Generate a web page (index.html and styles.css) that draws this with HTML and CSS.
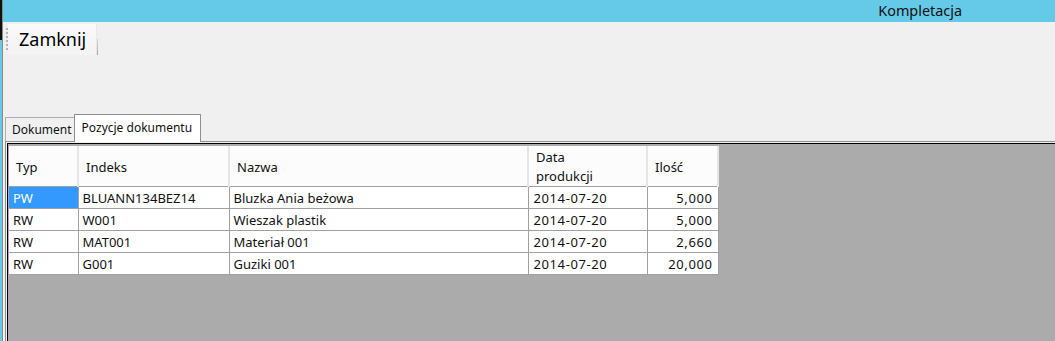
FILE: index.html
```html
<!DOCTYPE html>
<html lang="pl">
<head>
<meta charset="utf-8">
<link rel="stylesheet" href="styles.css">
</head>
<body>
<div class="app">
  <div class="edge"></div>
  <div class="main">
    <div class="titlebar"><span class="title">Kompletacja</span></div>
    <div class="toolbar">
      <div class="grip"></div>
      <div class="btn">Zamknij</div>
    </div>
    <div class="tabs">
      <div class="tab">Dokument</div>
      <div class="tab active">Pozycje dokumentu</div>
    </div>
    <div class="panel">
      <div class="grid">
        <table class="table">
          <colgroup>
            <col class="c1"><col class="c2"><col class="c3"><col class="c4"><col class="c5">
          </colgroup>
          <thead>
            <tr><th>Typ</th><th>Indeks</th><th>Nazwa</th><th>Data<br>produkcji</th><th>Ilość</th></tr>
          </thead>
          <tbody>
            <tr><td class="sel">PW</td><td>BLUANN134BEZ14</td><td>Bluzka Ania beżowa</td><td class="date">2014-07-20</td><td class="num">5,000</td></tr>
            <tr><td>RW</td><td>W001</td><td>Wieszak plastik</td><td class="date">2014-07-20</td><td class="num">5,000</td></tr>
            <tr><td>RW</td><td>MAT001</td><td>Materiał 001</td><td class="date">2014-07-20</td><td class="num">2,660</td></tr>
            <tr><td>RW</td><td>G001</td><td>Guziki 001</td><td class="date">2014-07-20</td><td class="num">20,000</td></tr>
          </tbody>
        </table>
      </div>
    </div>
  </div>
</div>
</body>
</html>
```
FILE: styles.css
```css
html, body {
  margin: 0;
  padding: 0;
}
body {
  width: 1055px;
  height: 341px;
  overflow: hidden;
  background: #f0f0f0;
  font-family: "Noto Sans", "Open Sans", sans-serif;
  color: #000;
}
.app {
  display: flex;
  height: 341px;
}
.edge {
  width: 2px;
  border-right: 1px solid #8a8a8a;
  background: linear-gradient(#111 0 40px, #65c9e8 40px);
  flex: none;
}
.main {
  flex: 1;
  display: flex;
  flex-direction: column;
  min-width: 0;
}
.titlebar {
  height: 22px;
  background: #65c9e8;
  display: flex;
  align-items: center;
  justify-content: flex-end;
  padding-right: 93px;
}
.title {
  font-size: 14.4px;
  color: #111;
  line-height: 22px;
}
.toolbar {
  height: 92px;
  display: flex;
  align-items: flex-start;
  padding-left: 3px;
  box-sizing: border-box;
}
.grip {
  width: 2px;
  height: 24px;
  margin-top: 6px;
  background: repeating-linear-gradient(#b4b4b4 0 2px, transparent 2px 4px);
}
.btn {
  margin-top: 2px;
  width: 89px;
  height: 31px;
  box-sizing: border-box;
  padding-left: 11px;
  font-size: 18px;
  line-height: 31px;
  background: linear-gradient(#fafafa, #f3f3f3);
  border-right: 1px solid #e8e8e8;
  color: #000;
  position: relative;
}
.btn::after {
  content: "";
  position: absolute;
  right: -2px;
  top: 15px;
  height: 16px;
  width: 1px;
  background: linear-gradient(#d8d8d8, #a8a8a8);
}
.tabs {
  display: flex;
  align-items: flex-end;
  height: 27px;
  padding-left: 2px;
  position: relative;
  z-index: 2;
}
.tab {
  height: 24px;
  box-sizing: border-box;
  padding: 0 2px 0 6px;
  font-size: 12px;
  line-height: 24px;
  border: 1px solid #adadad;
  border-bottom: none;
  background: #f0f0f0;
  color: #111;
}
.tab.active {
  height: 28px;
  margin-bottom: -1px;
  margin-left: -1px;
  padding: 0 8px 0 7px;
  line-height: 26px;
  background: #fff;
  border-color: #8f8f8f;
}
.panel {
  flex: 1;
  margin-left: 2px;
  border-top: 1px solid #8f8f8f;
  border-left: 1px solid #8f8f8f;
  display: flex;
  flex-direction: column;
}
.grid {
  flex: 1;
  margin-top: 1px;
  margin-left: 1px;
  border-top: 1px solid #000;
  border-left: 1px solid #000;
  background: #ababab;
  padding: 2px 0 0 1px;
}
.table {
  border-collapse: collapse;
  table-layout: fixed;
  width: 709px;
  font-size: 13px;
}
.c1 { width: 69px; }
.c2 { width: 151px; }
.c3 { width: 299px; }
.c4 { width: 119px; }
.c5 { width: 71px; }
th {
  height: 40px;
  box-sizing: border-box;
  padding: 2px 0 0 7px;
  text-align: left;
  font-weight: normal;
  font-size: 13px;
  line-height: 19px;
  background: #fcfcfc;
  border-right: 2px solid #e6e6e6;
  border-bottom: 1px solid #a0a0a0;
  color: #111;
}
td {
  height: 22px;
  box-sizing: border-box;
  padding: 1px 4px 0;
  background: #fff;
  border-right: 1px solid #a0a0a0;
  border-bottom: 1px solid #a0a0a0;
  line-height: 20px;
  white-space: nowrap;
  color: #111;
}
td.sel {
  background: #3399ff;
  color: #fff;
}
td.date {
  padding-left: 5px;
  letter-spacing: 0.6px;
}
td.num {
  text-align: right;
  padding-right: 5px;
  letter-spacing: 0.6px;
}
```
